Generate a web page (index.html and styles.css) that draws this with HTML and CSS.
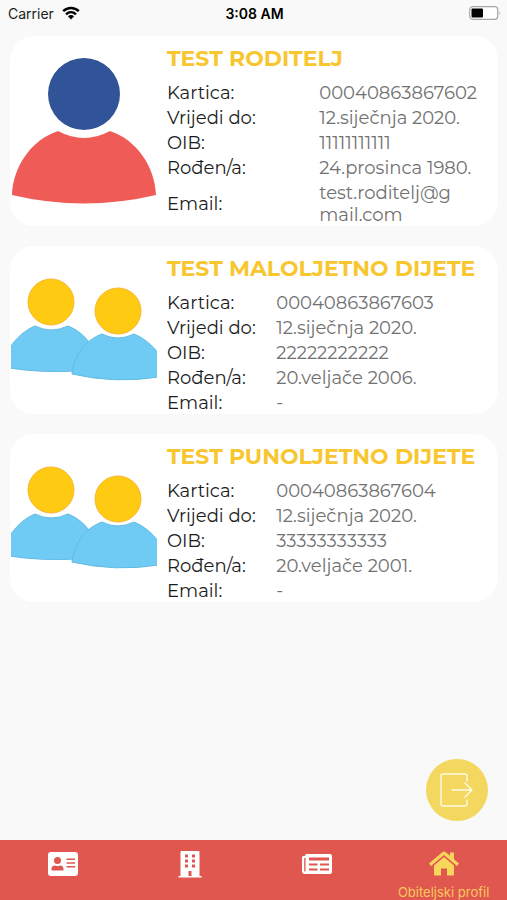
FILE: index.html
```html
<!DOCTYPE html>
<html lang="hr">

<head>
    <meta charset="UTF-8">
    <meta name="viewport" content="width=device-width, initial-scale=1.0">
    <title>Obiteljski profil</title>
    <link rel="stylesheet" href="styles.css">
</head>

<body>
    <svg class="symbols" aria-hidden="true">
        <symbol id="children" viewBox="0 0 146 146">
            <g fill="#6fcbf3" stroke="#62bbe4" stroke-width="1">
                <path d="M-2 92C5 81 14 73 24 69Q40 77 57 69C67 73 74 79 80 88L66 114Q30 116 -2 111Z" />
                <path d="M91 77Q107 85 123 77C133 81 141 88 148 97V120Q104 127 61 117C63 99 74 83 91 77Z" />
            </g>
            <g fill="#ffca12" stroke="#f9b52c" stroke-width="1">
                <circle cx="40" cy="45" r="23" />
                <circle cx="107" cy="54" r="23" />
            </g>
        </symbol>
    </svg>

    <header class="status">
        <div class="carrier">
            Carrier
            <svg width="18" height="14" viewBox="0 0 18 14" fill="none" stroke="#000" stroke-width="2.4">
                <path d="M1.2 5.2C5.5 .9 12.5 .9 16.8 5.2M4 8.4C7 5.6 11 5.6 14 8.4" />
                <path d="M9 13.4L5.9 10.3Q9 7.8 12.1 10.3Z" fill="#000" stroke="none" />
            </svg>
        </div>
        <div class="time">3:08 AM</div>
        <div class="battery">
            <svg width="32" height="14" viewBox="0 0 32 14">
                <rect x=".7" y=".7" width="28" height="12.6" rx="3" fill="#fff" stroke="#a5a5a5" stroke-width="1.2" />
                <rect x="2.5" y="2.5" width="11.5" height="9" rx="1" />
                <path d="M30.3 4.8Q32 7 30.3 9.2Z" fill="#a5a5a5" />
            </svg>
        </div>
    </header>

    <main>
        <article class="card card-parent">
            <svg class="avatar" viewBox="0 0 146 146">
                <circle cx="73" cy="36" r="36" fill="#305497" />
                <path d="M47 73Q73 87 99 73C126 82 144 109 145 137Q73 154 1 137C2 109 20 82 47 73Z" fill="#ef5b56" />
            </svg>
            <div class="info">
                <h2>TEST RODITELJ</h2>
                <table>
                    <tr><th scope="row">Kartica:</th><td>00040863867602</td></tr>
                    <tr><th scope="row">Vrijedi do:</th><td>12.siječnja 2020.</td></tr>
                    <tr><th scope="row">OIB:</th><td>11111111111</td></tr>
                    <tr><th scope="row">Rođen/a:</th><td>24.prosinca 1980.</td></tr>
                    <tr><th scope="row">Email:</th><td>test.roditelj@g<wbr>mail.com</td></tr>
                </table>
            </div>
        </article>

        <article class="card">
            <svg class="avatar"><use href="#children" /></svg>
            <div class="info">
                <h2>TEST MALOLJETNO DIJETE</h2>
                <table>
                    <tr><th scope="row">Kartica:</th><td>00040863867603</td></tr>
                    <tr><th scope="row">Vrijedi do:</th><td>12.siječnja 2020.</td></tr>
                    <tr><th scope="row">OIB:</th><td>22222222222</td></tr>
                    <tr><th scope="row">Rođen/a:</th><td>20.veljače 2006.</td></tr>
                    <tr><th scope="row">Email:</th><td>-</td></tr>
                </table>
            </div>
        </article>

        <article class="card">
            <svg class="avatar"><use href="#children" /></svg>
            <div class="info">
                <h2>TEST PUNOLJETNO DIJETE</h2>
                <table>
                    <tr><th scope="row">Kartica:</th><td>00040863867604</td></tr>
                    <tr><th scope="row">Vrijedi do:</th><td>12.siječnja 2020.</td></tr>
                    <tr><th scope="row">OIB:</th><td>33333333333</td></tr>
                    <tr><th scope="row">Rođen/a:</th><td>20.veljače 2001.</td></tr>
                    <tr><th scope="row">Email:</th><td>-</td></tr>
                </table>
            </div>
        </article>

        <button class="logout" type="button" aria-label="Odjava">
            <svg width="34" height="34" viewBox="0 0 34 34" fill="none" stroke="#fffbe6" stroke-width="1.4" stroke-linejoin="round" stroke-linecap="round">
                <path d="M27 8V3Q27 1 25 1H3Q1 1 1 3V31Q1 33 3 33H25Q27 33 27 31V27M12 17H32M25 10L32 17L25 24" />
            </svg>
        </button>
    </main>

    <nav class="tabs">
        <a href="#kartica" aria-label="Kartica">
            <svg width="32" height="28" viewBox="0 0 32 28">
                <rect x="1" y="2" width="30" height="24" rx="3" fill="#fff" />
                <g fill="#e05750">
                    <circle cx="10.5" cy="10.5" r="3.5" />
                    <path d="M4.500 20.500V19Q4.500 15.500 8 15.500Q10.500 16.500 13 15.500Q16.500 15.500 16.500 19V20.500Z" />
                    <path d="M19.500 8.500H28V10H19.500ZM19.500 12.200H28V13.700H19.500ZM19.500 16H28V17.500H19.500Z" />
                </g>
            </svg>
        </a>
        <a href="#ustanove" aria-label="Ustanove">
            <svg width="24" height="28" viewBox="0 0 24 28">
                <path d="M2.500 26V2Q2.500 1 3.500 1H20.500Q21.500 1 21.500 2V26H23.500V27.500H.5V26Z" fill="#fff" />
                <path d="M7 4.500H10V7.500H7ZM14 4.500H17V7.500H14ZM7 9.500H10V12.500H7ZM14 9.500H17V12.500H14ZM7 14.500H10V17.500H7ZM14 14.500H17V17.500H14ZM10.500 21H13.500V26H10.500Z" fill="#e05750" />
            </svg>
        </a>
        <a href="#novosti" aria-label="Novosti">
            <svg width="32" height="28" viewBox="0 0 32 28">
                <path d="M5.500 4H29Q31 4 31 6V22Q31 24 29 24H4Q1 24 1 21V7.500Q1 6 2.500 6H4Q4 4 5.500 4Z" fill="#fff" />
                <path d="M3.200 8H4.500V21Q3.800 22 3.200 21ZM8 7.500H28V10.500H8ZM8 13.500H16.500V15.500H8ZM19 13.500H28V15.500H19ZM8 18.500H16.500V20.500H8ZM19 18.500H28V20.500H19Z" fill="#e05750" />
            </svg>
        </a>
        <a class="active" href="#profil">
            <svg width="32" height="28" viewBox="0 0 32 28" fill="#f8d65c">
                <path d="M16 1.500Q17 1.500 18 2.400L22 5.800V2.500H26V9.300L31 13.600L29 16L16 5L3 16L1 13.600L14 2.400Q15 1.500 16 1.500Z" />
                <path d="M16 7L26 15.500V24.500Q26 25.500 25 25.500H19V18.500H13V25.500H7Q6 25.500 6 24.500V15.500Z" />
            </svg>
            <span>Obiteljski profil</span>
        </a>
    </nav>
</body>

</html>
```

FILE: styles.css
```css
* {
    box-sizing: border-box;
}

body {
    margin: 0;
    min-height: 100vh;
    display: flex;
    flex-direction: column;
    font-family: 'Montserrat', 'Inter', sans-serif;
    background-color: #f9f9f9;
    color: #1c1c1c;
}

.symbols {
    position: absolute;
    width: 0;
    height: 0;
}

/* status bar */
.status {
    display: grid;
    grid-template-columns: 1fr auto 1fr;
    align-items: center;
    height: 26px;
    padding: 0 6px 0 8px;
    font-family: 'Inter', sans-serif;
    font-size: 14px;
}

.carrier {
    display: flex;
    align-items: center;
    gap: 8px;
}

.time {
    font-weight: 600;
    color: #000;
}

.battery {
    display: flex;
    justify-content: flex-end;
}

/* profile cards */
main {
    position: relative;
    flex: 1;
    display: flex;
    flex-direction: column;
    gap: 20px;
    padding: 10px 9px 20px 10px;
}

.card {
    display: flex;
    align-items: center;
    gap: 10px;
    padding-left: 1px;
    border-radius: 24px;
    background-color: #fff;
}

.avatar {
    flex: none;
    width: 146px;
    height: 146px;
}

.info {
    flex: 1;
    padding-top: 11px;
}

.info h2 {
    margin: 0 0 8px;
    font-size: 22px;
    line-height: 24px;
    font-weight: 700;
    color: #f8c62f;
    white-space: nowrap;
}

.info table {
    width: 100%;
    table-layout: fixed;
    border-collapse: collapse;
    font-size: 18px;
    line-height: 22px;
}

.info th,
.info td {
    padding: 3px 0 0;
    text-align: left;
    font-weight: 400;
}

.info th {
    width: 33%;
}

.card-parent th {
    width: 46%;
}

.info td {
    color: #717171;
}

.logout {
    position: absolute;
    right: 19px;
    bottom: 19px;
    width: 62px;
    height: 62px;
    display: flex;
    justify-content: center;
    align-items: center;
    padding: 0;
    border: none;
    border-radius: 50%;
    background-color: #f4d75e;
    cursor: pointer;
}

/* bottom tabs */
.tabs {
    display: flex;
    height: 60px;
    background-color: #e05750;
}

.tabs a {
    flex: 1;
    display: flex;
    flex-direction: column;
    align-items: center;
    gap: 6px;
    padding-top: 10px;
    font-family: 'Inter', sans-serif;
    font-size: 13px;
    line-height: 16px;
    text-decoration: none;
    white-space: nowrap;
}

.tabs .active {
    color: #f8c85a;
}
```
